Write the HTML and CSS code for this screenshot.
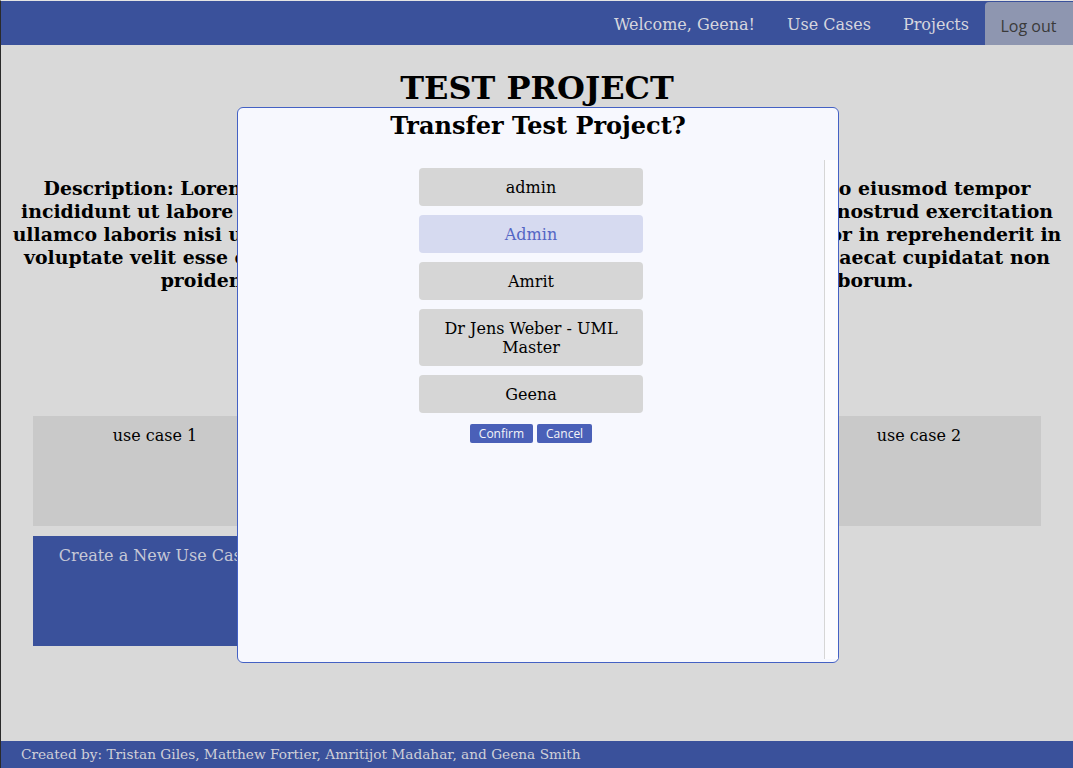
FILE: index.html
```html
<!DOCTYPE html>
<html lang="en">
<head>
<meta charset="utf-8">
<title>Test Project</title>
<link rel="stylesheet" href="styles.css">
</head>
<body>
<div class="page">
  <nav class="topnav">
    <span class="nav-link">Welcome, Geena!</span>
    <a class="nav-link" href="#">Use Cases</a>
    <a class="nav-link" href="#">Projects</a>
    <button class="logout">Log out</button>
  </nav>
  <main class="content">
    <h1 class="title">TEST PROJECT</h1>
    <h3 class="description">Description: Lorem ipsum dolor sit amet, consectetur adipiscing elit, sed do eiusmod tempor incididunt ut labore et dolore magna aliqua. Ut enim ad minim veniam, quis nostrud exercitation ullamco laboris nisi ut aliquip ex ea commodo consequat. Duis aute irure dolor in reprehenderit in voluptate velit esse cillum dolore eu fugiat nulla pariatur. Excepteur sint occaecat cupidatat non proident, sunt in culpa qui officia deserunt mollit anim id est laborum.</h3>
    <div class="cases">
      <div class="case-card">use case 1</div>
      <div class="case-card">use case 2</div>
    </div>
    <div class="create-row">
      <div class="create-card">Create a New Use Case</div>
    </div>
  </main>
  <footer class="footer">Created by: Tristan Giles, Matthew Fortier, Amritijot Madahar, and Geena Smith</footer>
</div>

<div class="modal">
  <h2 class="modal-title">Transfer Test Project?</h2>
  <div class="modal-body">
    <div class="user-list">
      <div class="user">admin</div>
      <div class="user selected">Admin</div>
      <div class="user">Amrit</div>
      <div class="user">Dr Jens Weber - UML Master</div>
      <div class="user">Geena</div>
      <div class="actions">
        <button class="btn">Confirm</button>
        <button class="btn">Cancel</button>
      </div>
    </div>
    <div class="track"></div>
  </div>
</div>
</body>
</html>
```

FILE: styles.css
```css
html, body {
  margin: 0;
  padding: 0;
}

body {
  background: #d9d9d9;
  font-family: "DejaVu Serif", serif;
  color: #000;
}

.page {
  border-top: 1px solid #e4e4e4;
  border-left: 1px solid #2a2a2a;
  display: flex;
  flex-direction: column;
  box-sizing: border-box;
  height: 768px;
}

.topnav {
  background: #3a519b;
  height: 44px;
  display: flex;
  justify-content: flex-end;
  align-items: stretch;
}

.nav-link {
  color: #d6d6de;
  text-decoration: none;
  font-size: 16px;
  padding: 2px 16px 0;
  display: flex;
  align-items: center;
}

.logout {
  background: #8e96b0;
  color: #3a3a3a;
  border: none;
  border-radius: 4px 0 0 0;
  font-family: "Open Sans", sans-serif;
  font-size: 16px;
  padding: 4px 16px 0 15px;
  margin-top: 1px;
  width: 88px;
}

.content {
  flex: 1;
  display: flex;
  flex-direction: column;
}

.title {
  font-size: 32px;
  text-align: center;
  margin: 24px 0 0;
  line-height: 38px;
}

.description {
  font-size: 18.9px;
  line-height: 23px;
  text-align: center;
  margin: 70px 0 0;
  padding: 0 9px;
}

.cases {
  display: flex;
  justify-content: space-between;
  padding: 0 32px;
  margin-top: 124px;
}

.case-card {
  width: 244px;
  height: 110px;
  background: #c9c9c9;
  text-align: center;
  font-size: 16px;
  padding-top: 10px;
  box-sizing: border-box;
}

.create-row {
  padding: 0 32px;
  margin-top: 10px;
}

.create-card {
  width: 244px;
  height: 110px;
  background: #3a519b;
  color: #c6c8d6;
  text-align: center;
  font-size: 16px;
  padding-top: 10px;
  box-sizing: border-box;
}

.footer {
  margin-top: auto;
  background: #3a519b;
  color: #d0d0d8;
  font-size: 13.7px;
  height: 27px;
  line-height: 26px;
  padding-left: 20px;
}

/* Modal */
.modal {
  position: fixed;
  left: 237px;
  top: 107px;
  width: 602px;
  height: 556px;
  box-sizing: border-box;
  background: #f7f8fe;
  border: 1px solid #4461c4;
  border-radius: 6px;
  display: flex;
  flex-direction: column;
}

.modal-title {
  font-size: 24px;
  line-height: 28px;
  text-align: center;
  margin: 4px 0 0;
}

.modal-body {
  flex: 1;
  display: flex;
  margin-top: 20px;
  margin-bottom: 3px;
}

.user-list {
  flex: 1;
  display: flex;
  flex-direction: column;
  align-items: center;
  gap: 9px;
  padding-top: 8px;
}

.user {
  width: 224px;
  box-sizing: border-box;
  background: #d6d6d6;
  border-radius: 4px;
  text-align: center;
  font-size: 16px;
  line-height: 19px;
  padding: 10px 20px 9px;
}

.user.selected {
  background: #d6daf0;
  color: #5466c4;
}

.actions {
  display: flex;
  gap: 4px;
  margin-top: 2px;
}

.btn {
  background: #4a60b8;
  color: #f4f4f8;
  border: none;
  border-radius: 2px;
  font-family: "Open Sans", sans-serif;
  font-size: 12px;
  line-height: 16px;
  height: 19px;
  padding: 1px 9px 0;
}

.track {
  width: 13px;
  border-left: 1px solid #d6d6d6;
  background: #fcfcff;
}
```
